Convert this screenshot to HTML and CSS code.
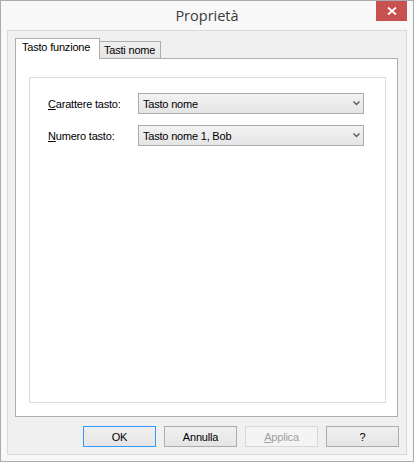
FILE: index.html
```html
<!DOCTYPE html>
<html lang="it">
<head>
  <meta charset="UTF-8">
  <title>Proprietà</title>
  <link rel="stylesheet" href="styles.css">
</head>
<body>

  <div class="window">

    <!-- Title bar -->
    <div class="titlebar">
      <span></span>
      <span class="title">Proprietà</span>
      <button class="close" title="Chiudi">
        <svg width="10" height="8" viewBox="0 0 10 8">
          <path d="M1 0.5 L9 7.5 M9 0.5 L1 7.5" stroke="#fff" stroke-width="1.8" fill="none"/>
        </svg>
      </button>
    </div>

    <div class="client">

      <!-- Tabs -->
      <div class="tabs">
        <div class="tab active">Tasto funzione</div>
        <div class="tab">Tasti nome</div>
      </div>

      <div class="panel">
        <div class="group">
          <div class="row">
            <label class="label"><u>C</u>arattere tasto:</label>
            <div class="select">
              <span>Tasto nome</span>
              <svg width="7" height="5" viewBox="0 0 7 5"><path d="M0.5 0.5 L3.5 3.5 L6.5 0.5" stroke="#555" stroke-width="1.3" fill="none"/></svg>
            </div>
          </div>
          <div class="row">
            <label class="label"><u>N</u>umero tasto:</label>
            <div class="select">
              <span>Tasto nome 1, Bob</span>
              <svg width="7" height="5" viewBox="0 0 7 5"><path d="M0.5 0.5 L3.5 3.5 L6.5 0.5" stroke="#555" stroke-width="1.3" fill="none"/></svg>
            </div>
          </div>
        </div>
      </div>

      <!-- Dialog buttons -->
      <div class="buttons">
        <button class="button default">OK</button>
        <button class="button">Annulla</button>
        <button class="button" disabled><u>A</u>pplica</button>
        <button class="button">?</button>
      </div>

    </div>
  </div>

</body>
</html>
```

FILE: styles.css
```css
* {
  margin: 0;
  padding: 0;
  box-sizing: border-box;
}

body {
  background: #ffffff;
  font-family: 'Liberation Sans', Arial, sans-serif;
  font-size: 11px;
  letter-spacing: -0.2px;
  color: #000;
}

.window {
  width: 414px;
  height: 462px;
  border: 1px solid #ababab;
  background-color: #f8f8f8;
  padding: 0 6px 6px;
  display: flex;
  flex-direction: column;
}

/* Title bar */
.titlebar {
  height: 29px;
  display: grid;
  grid-template-columns: 1fr auto 1fr;
  align-items: start;
}

.title {
  font-family: 'Open Sans', 'Noto Sans', sans-serif;
  font-size: 14.5px;
  letter-spacing: 0;
  color: #3a3a3a;
  line-height: 29px;
}

.close {
  justify-self: end;
  width: 31px;
  height: 20px;
  border: none;
  background-color: #c75050;
  display: flex;
  align-items: center;
  justify-content: center;
}

/* Client area */
.client {
  flex: 1;
  border: 1px solid #d9d9d9;
  background-color: #f0f0f0;
  padding: 7px 8px 7px 7px;
  display: flex;
  flex-direction: column;
}

.tabs {
  display: flex;
  align-items: flex-end;
  margin-bottom: -1px;
  position: relative;
  z-index: 1;
}

.tab {
  width: 61px;
  height: 18px;
  padding: 0 0 0 4px;
  border: 1px solid #adadad;
  border-left: none;
  background: linear-gradient(#f0f0f0, #e5e5e5);
  line-height: 16px;
  white-space: nowrap;
}

.tab.active {
  width: 85px;
  height: 21px;
  padding: 0 0 0 6px;
  border-left: 1px solid #adadad;
  border-bottom: none;
  background: #ffffff;
  line-height: 17px;
}

.panel {
  flex: 1;
  border: 1px solid #adadad;
  background-color: #ffffff;
  padding: 18px 11px 13px 13px;
  display: flex;
  flex-direction: column;
}

.group {
  flex: 1;
  border: 1px solid #dcdcdc;
  padding: 15px 0 0 18px;
  display: flex;
  flex-direction: column;
  gap: 11px;
}

.row {
  display: flex;
  align-items: center;
}

.label {
  width: 90px;
}

.select {
  width: 226px;
  height: 21px;
  border: 1px solid #acacac;
  background: linear-gradient(#f2f2f2, #e5e5e5);
  padding: 0 3px 0 4px;
  display: flex;
  align-items: center;
  justify-content: space-between;
}

/* Bottom buttons */
.buttons {
  display: flex;
  justify-content: flex-end;
  gap: 8px;
  margin-top: 9px;
  margin-right: -1px;
}

.button {
  width: 73px;
  height: 21px;
  border: 1px solid #adadad;
  background: linear-gradient(#f0f0f0, #e5e5e5);
  font-family: inherit;
  font-size: 11px;
  letter-spacing: -0.2px;
  color: #000;
}

.button.default {
  border-color: #3399ff;
}

.button:disabled {
  border-color: #d9d9d9;
  background: #f4f4f4;
  color: #a0a0a0;
}
```
